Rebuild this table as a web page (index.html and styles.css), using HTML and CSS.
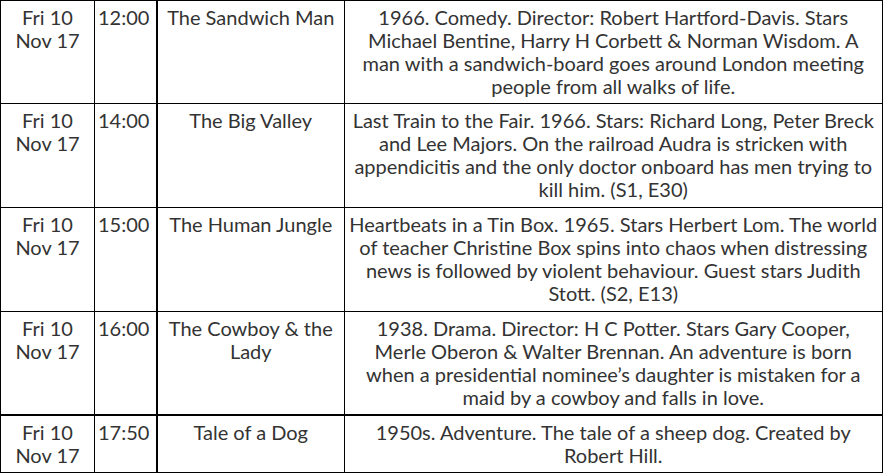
FILE: index.html
```html
<!DOCTYPE html>
<html lang="en">
<head>
<meta charset="utf-8">
<title>TV Listings</title>
<link rel="stylesheet" href="styles.css">
</head>
<body>
<table class="listings">
  <colgroup>
    <col class="c-date">
    <col class="c-time">
    <col class="c-title">
    <col class="c-desc">
  </colgroup>
  <tbody>
    <tr class="r1">
      <td class="date">Fri 10<br>Nov 17</td>
      <td class="time">12:00</td>
      <td class="title">The Sandwich Man</td>
      <td class="desc">1966. Comedy. Director: Robert Hartford-Davis. Stars Michael Bentine, Harry H Corbett &amp; Norman Wisdom. A man with a sandwich-board goes around London meeting people from all walks of life.</td>
    </tr>
    <tr class="r2">
      <td class="date">Fri 10<br>Nov 17</td>
      <td class="time">14:00</td>
      <td class="title">The Big Valley</td>
      <td class="desc">Last Train to the Fair. 1966. Stars: Richard Long, Peter Breck and Lee Majors. On the railroad Audra is stricken with appendicitis and the only doctor onboard has men trying to kill him. (S1, E30)</td>
    </tr>
    <tr class="r3">
      <td class="date">Fri 10<br>Nov 17</td>
      <td class="time">15:00</td>
      <td class="title">The Human Jungle</td>
      <td class="desc">Heartbeats in a Tin Box. 1965. Stars Herbert Lom. The world of teacher Christine Box spins into chaos when distressing news is followed by violent behaviour. Guest stars Judith Stott. (S2, E13)</td>
    </tr>
    <tr class="r4">
      <td class="date">Fri 10<br>Nov 17</td>
      <td class="time">16:00</td>
      <td class="title">The Cowboy &amp; the Lady</td>
      <td class="desc">1938. Drama. Director: H C Potter. Stars Gary Cooper, Merle Oberon &amp; Walter Brennan. An adventure is born when a presidential nominee’s daughter is mistaken for a maid by a cowboy and falls in love.</td>
    </tr>
    <tr class="r5">
      <td class="date">Fri 10<br>Nov 17</td>
      <td class="time">17:50</td>
      <td class="title">Tale of a Dog</td>
      <td class="desc">1950s. Adventure. The tale of a sheep dog. Created by Robert Hill.</td>
    </tr>
  </tbody>
</table>
</body>
</html>
```

FILE: styles.css
```css
html, body {
  margin: 0;
  padding: 0;
  background: #fff;
}

.listings {
  border-collapse: collapse;
  table-layout: fixed;
  width: 882px;
  font-family: Lato, "Open Sans", sans-serif;
  font-size: 20px;
  line-height: 23px;
  color: #333;
}

.c-date { width: 94px; }
.c-time { width: 62px; }
.c-title { width: 188px; }
.c-desc { width: 538px; }

.listings td {
  border: 1px solid #000;
  vertical-align: top;
  padding: 5px 3px 5px;
  text-align: center;
}

.listings td.time {
  text-align: left;
}

.listings td.title {
  border-left-width: 2px;
}

.listings td.desc {
  padding-left: 3.5px;
  padding-right: 4px;
}

.listings tr.r5 td {
  border-top-width: 2px;
}

.r1 td { height: 90px; }
.r2 td { height: 93px; }
.r3 td { height: 93px; }
.r4 td { height: 92px; }
.r5 td { height: 45px; }
```
